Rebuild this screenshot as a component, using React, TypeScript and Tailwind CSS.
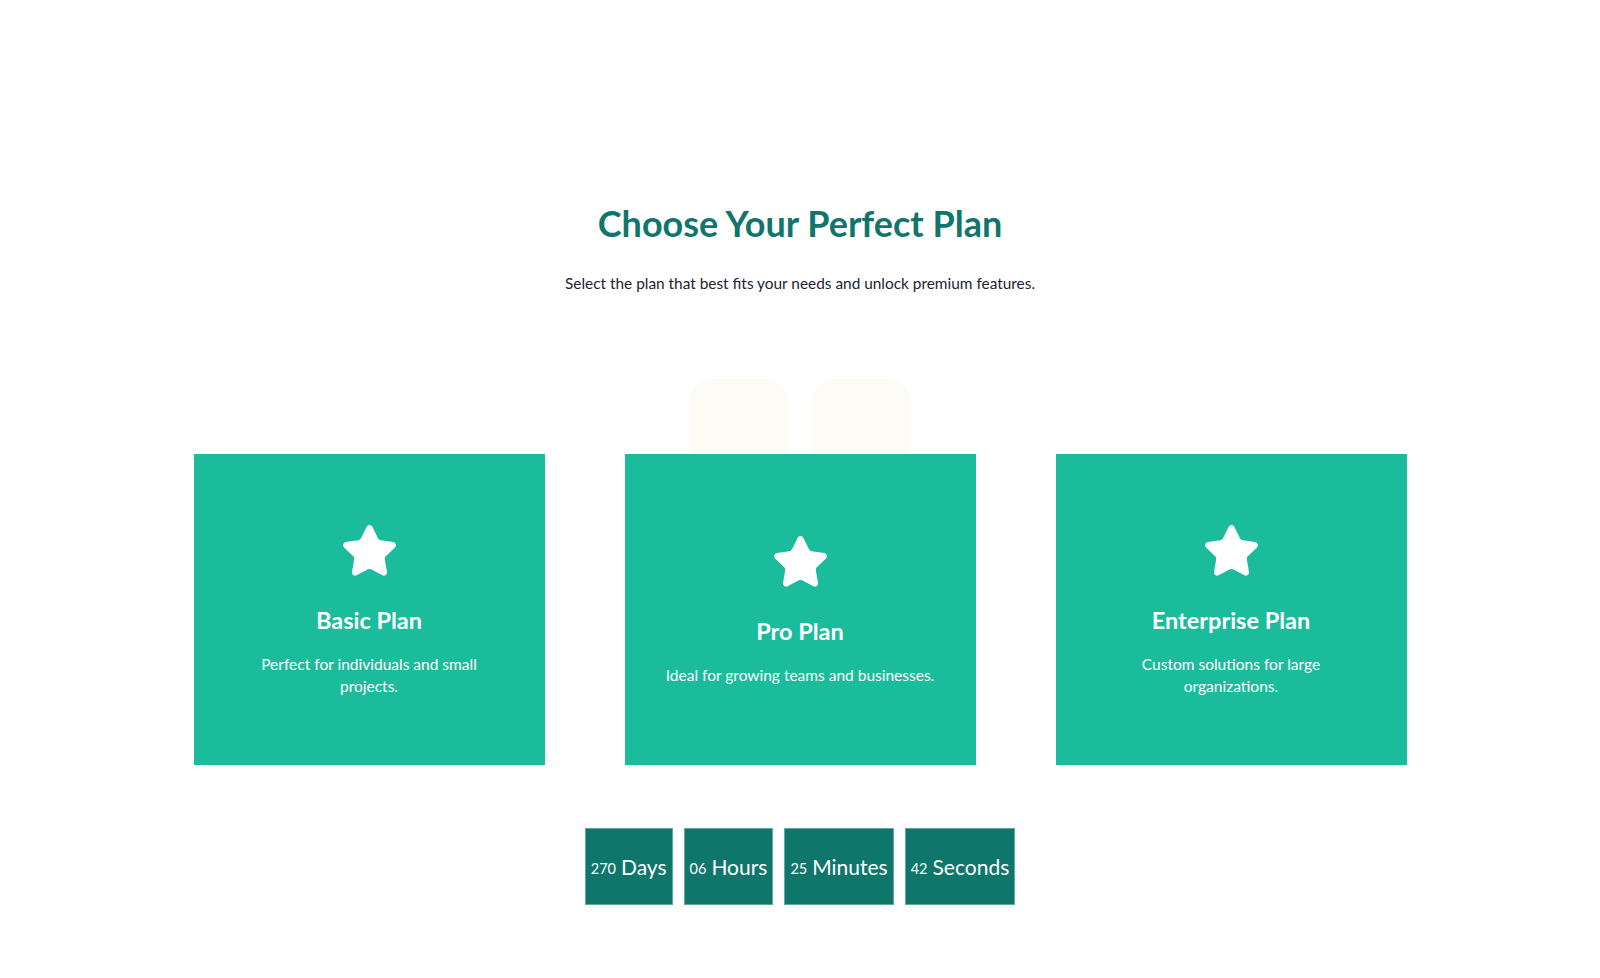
import { Star } from "lucide-react";

const PLANS = [
  {
    title: "Basic Plan",
    desc: "Perfect for individuals and small projects.",
  },
  {
    title: "Pro Plan",
    desc: "Ideal for growing teams and businesses.",
  },
  {
    title: "Enterprise Plan",
    desc: "Custom solutions for large organizations.",
  },
];

const COUNTDOWN = [
  { value: "270", label: "Days" },
  { value: "06", label: "Hours" },
  { value: "25", label: "Minutes" },
  { value: "42", label: "Seconds" },
];

export default function App() {
  return (
    <div className="w-[1600px] bg-white font-['Lato',sans-serif]">
      <section className="flex flex-col items-center pt-[201px] pb-[60px]">
        <h2 className="text-[36px] leading-[44px] font-bold text-[#10766c]">
          Choose Your Perfect Plan
        </h2>
        <p className="mt-[27px] text-[15.4px] leading-[22px] text-[#1e2433]">
          Select the plan that best fits your needs and unlock premium features.
        </p>

        {/* Plans */}
        <div className="relative mt-[160px]">
          {/* faint decorative tiles peeking out behind the middle card */}
          <div className="absolute -top-[75px] left-1/2 -translate-x-1/2 flex gap-[24px]">
            <div className="w-[98px] h-[92px] rounded-t-[22px] bg-[#fdfbf5]" />
            <div className="w-[98px] h-[92px] rounded-t-[22px] bg-[#fdfbf5]" />
          </div>

          <div className="relative grid grid-cols-[351px_351px_351px] gap-[80px]">
            {PLANS.map((plan) => (
              <div
                key={plan.title}
                className="h-[311px] bg-[#1abc9c] flex flex-col items-center justify-center text-center text-white px-[39px]"
              >
                <Star
                  size={59}
                  fill="white"
                  stroke="white"
                  strokeWidth={1.5}
                  strokeLinejoin="round"
                  className="mb-[25px]"
                />
                <h3 className="text-[23.5px] leading-[29px] font-bold">{plan.title}</h3>
                <p className="mt-[19px] text-[15.5px] leading-[21.5px]">{plan.desc}</p>
              </div>
            ))}
          </div>
        </div>

        {/* Countdown */}
        <div className="mt-[63px] flex gap-[11px]">
          {COUNTDOWN.map((c) => (
            <div
              key={c.label}
              className="h-[77px] px-[5px] flex items-center bg-[#0f766c] border border-[#5fa9a0] text-white"
            >
              <span className="text-[14.5px] mr-[5px] pt-[4px]">{c.value}</span>
              <span className="text-[21px]">{c.label}</span>
            </div>
          ))}
        </div>
      </section>
    </div>
  );
}
